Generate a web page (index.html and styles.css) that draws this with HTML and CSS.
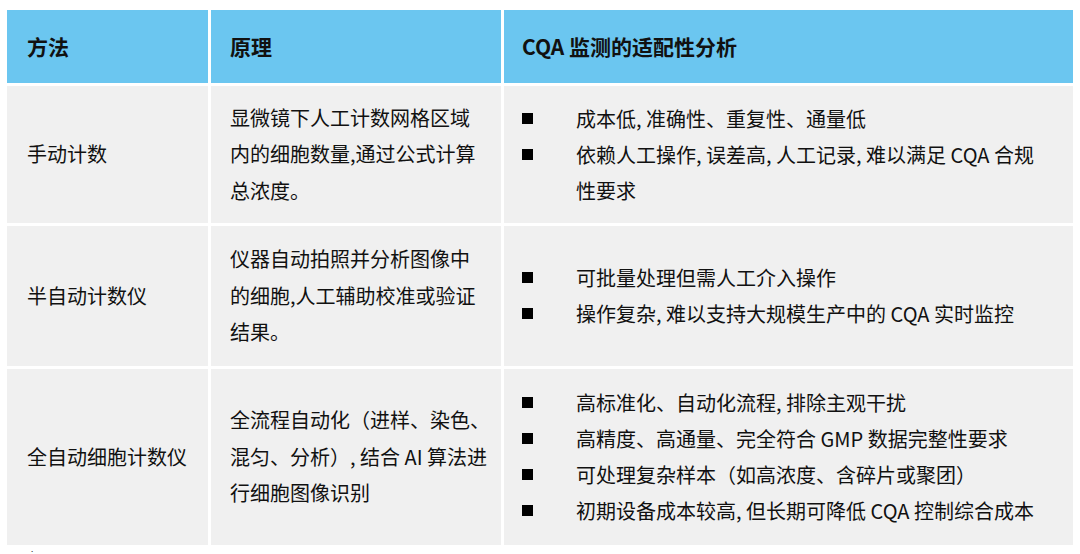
FILE: index.html
```html
<!DOCTYPE html>
<html lang="zh-CN">
<head>
<meta charset="utf-8">
<title>细胞计数方法对比</title>
<link rel="stylesheet" href="styles.css">
</head>
<body>
<div class="table">
  <div class="cell head c1">方法</div>
  <div class="cell head c2">原理</div>
  <div class="cell head c3">CQA 监测的适配性分析</div>

  <div class="cell c1">手动计数</div>
  <div class="cell c2">显微镜下人工计数网格区域内的细胞数量,通过公式计算总浓度。</div>
  <div class="cell c3">
    <ul class="list">
      <li>成本低, 准确性、重复性、通量低</li>
      <li>依赖人工操作, 误差高, 人工记录, 难以满足 CQA 合规性要求</li>
    </ul>
  </div>

  <div class="cell c1">半自动计数仪</div>
  <div class="cell c2">仪器自动拍照并分析图像中的细胞,人工辅助校准或验证结果。</div>
  <div class="cell c3">
    <ul class="list">
      <li>可批量处理但需人工介入操作</li>
      <li>操作复杂, 难以支持大规模生产中的 CQA 实时监控</li>
    </ul>
  </div>

  <div class="cell c1">全自动细胞计数仪</div>
  <div class="cell c2 nowrap">全流程自动化（进样、染色、<br>混匀、分析）, 结合 AI 算法进<br>行细胞图像识别</div>
  <div class="cell c3">
    <ul class="list">
      <li>高标准化、自动化流程, 排除主观干扰</li>
      <li>高精度、高通量、完全符合 GMP 数据完整性要求</li>
      <li>可处理复杂样本（如高浓度、含碎片或聚团）</li>
      <li>初期设备成本较高, 但长期可降低 CQA 控制综合成本</li>
    </ul>
  </div>
</div>
<p class="tail">.</p>
</body>
</html>
```

FILE: styles.css
```css
html, body {
  margin: 0;
  padding: 0;
  background: #ffffff;
}

body {
  padding: 10px 0 0 7px;
  font-family: "Noto Sans CJK SC", "Noto Sans", sans-serif;
  color: #111111;
}

.table {
  display: grid;
  grid-template-columns: 201px 290px 569px;
  grid-template-rows: 73px 137px 140px 176px;
  gap: 3px;
  width: 1066px;
}

.cell {
  background: #f0f0f0;
  display: flex;
  flex-direction: column;
  justify-content: center;
  font-size: 20px;
  line-height: 36.5px;
}

.head {
  background: #6bc6f0;
  font-weight: 700;
  font-size: 21px;
}

.c1 {
  padding-left: 20px;
}

.c2 {
  padding: 0 17px 0 19px;
}

.nowrap {
  white-space: nowrap;
}

.c3 {
  padding: 0 28px 0 18px;
}

.list {
  list-style: none;
  margin: 0;
  padding: 0 0 0 54px;
}

.list li {
  position: relative;
  line-height: 36px;
}

.list li::before {
  content: "";
  position: absolute;
  left: -54px;
  top: 12px;
  width: 11px;
  height: 11px;
  background: #000000;
}

.tail {
  margin: 0;
  padding-left: 24px;
  font-size: 8px;
  line-height: 8px;
}
```
